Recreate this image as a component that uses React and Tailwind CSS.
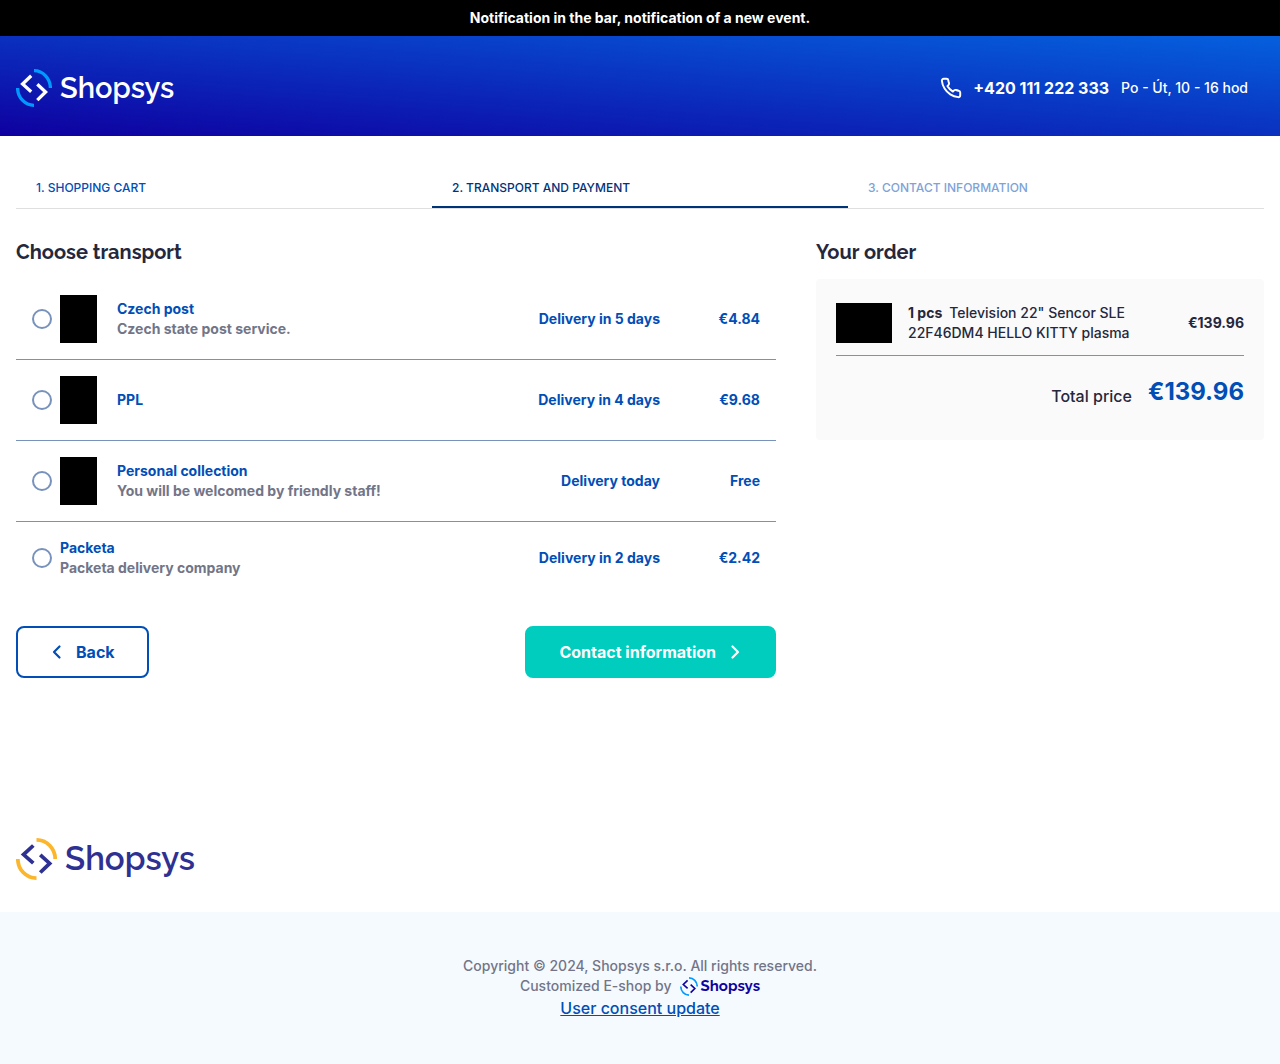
import React from "react";

const transports = [
  { id: "czech-post", name: "Czech post", note: "Czech state post service.", delivery: "Delivery in 5 days", price: "€4.84", image: true },
  { id: "ppl", name: "PPL", delivery: "Delivery in 4 days", price: "€9.68", image: true },
  { id: "personal", name: "Personal collection", note: "You will be welcomed by friendly staff!", delivery: "Delivery today", price: "Free", image: true },
  { id: "packeta", name: "Packeta", note: "Packeta delivery company", delivery: "Delivery in 2 days", price: "€2.42", image: false },
];

function LogoMark({ className, arc }) {
  return (
    <svg viewBox="0 0 36 38" fill="none" strokeWidth="3.3" preserveAspectRatio="none" className={className} aria-hidden="true">
      <path d="M18 1.7A16.4 17.3 0 0 1 34.4 19M1.6 19A16.4 17.3 0 0 0 18 36.3" stroke={arc} />
      <path d="M15.2 6.8L6.6 15L15.2 22.8M21.3 15.2L29.6 23L21.3 31.2" stroke="currentColor" />
    </svg>
  );
}

function Chevron({ d }) {
  return (
    <svg viewBox="0 0 16 16" className="size-4" fill="none" stroke="currentColor" strokeWidth="2.2" strokeLinecap="round" strokeLinejoin="round" aria-hidden="true">
      <path d={d} />
    </svg>
  );
}

function PhoneIcon() {
  return (
    <svg viewBox="-1 -1 26 26" className="size-6" fill="none" stroke="currentColor" strokeWidth="2.1" strokeLinecap="round" strokeLinejoin="round" aria-hidden="true">
      <path d="M22 16.92v3a2 2 0 0 1-2.18 2 19.79 19.79 0 0 1-8.63-3.07 19.5 19.5 0 0 1-6-6 19.79 19.79 0 0 1-3.07-8.67A2 2 0 0 1 4.11 2h3a2 2 0 0 1 2 1.72c.127.96.361 1.903.7 2.81a2 2 0 0 1-.45 2.11L8.09 9.91a16 16 0 0 0 6 6l1.27-1.27a2 2 0 0 1 2.11-.45c.907.339 1.85.573 2.81.7A2 2 0 0 1 22 16.92z" />
    </svg>
  );
}

function Transport({ item }) {
  return (
    <li className="border-b border-[#7892bc] last:border-b-0">
      <label htmlFor={item.id} className="flex cursor-pointer items-center p-4 text-sm leading-5 font-bold text-[#004eb6]">
        <input id={item.id} type="radio" name="transport" className="mr-2 size-5 shrink-0 appearance-none rounded-full border-2 border-[#7892bc] bg-white checked:border-[6px]" />
        {item.image && <span className="mr-5 h-12 w-[37px] shrink-0 bg-black" />}
        <span className="flex flex-1 flex-col">
          <span>{item.name}</span>
          {item.note && <span className="text-[#727588]">{item.note}</span>}
        </span>
        <span>{item.delivery}</span>
        <span className="w-[100px] text-right">{item.price}</span>
      </label>
    </li>
  );
}

export default function App() {
  return (
    <div className="flex min-h-screen flex-col bg-white font-['Inter',sans-serif] text-[#25283d]">
      <div className="bg-black px-4 py-2 text-center text-sm leading-5 font-bold text-white">
        Notification in the bar, notification of a new event.
      </div>
      <header className="bg-linear-to-tr/srgb from-[#0f00a0] to-[#0560de] text-white">
        <div className="flex h-[100px] items-center justify-between pt-1 pr-8 pl-4">
          <a href="#" aria-label="Shopsys" className="flex items-center gap-2">
            <LogoMark arc="#009aff" className="h-[38px] w-9" />
            <span className="font-['Raleway','Lato',sans-serif] text-[29px] leading-9 font-semibold">Shopsys</span>
          </a>
          <div className="flex items-center gap-3">
            <a href="tel:+420111222333" className="flex items-center gap-[10px] font-bold">
              <PhoneIcon />
              +420 111 222 333
            </a>
            <span className="text-sm font-medium">Po - Út, 10 - 16 hod</span>
          </div>
        </div>
      </header>

      <main className="px-4 pt-8">
        <nav aria-label="Order steps">
          <ol className="grid grid-cols-3 border-b border-[#dfdfe2] text-xs font-medium uppercase">
            <li><a href="#" className="flex h-10 items-center px-5 text-[#004eb6]">1. Shopping cart</a></li>
            <li><a href="#" aria-current="step" className="relative flex h-10 items-center px-5 text-[#00347a] after:absolute after:inset-x-0 after:bottom-0 after:h-[2px] after:bg-[#00347a]">2. Transport and payment</a></li>
            <li><span className="flex h-10 items-center px-5 text-[#7da3d8]">3. Contact information</span></li>
          </ol>
        </nav>

        <div className="mt-7 grid grid-cols-[minmax(0,1fr)_448px] items-start gap-10">
          <section>
            <h1 className="font-['Raleway','Lato',sans-serif] text-xl leading-[30px] font-bold">Choose transport</h1>
            <ul className="mt-3">
              {transports.map((item) => <Transport key={item.id} item={item} />)}
            </ul>
            <div className="mt-8 flex justify-between font-bold">
              <button type="button" className="flex h-[52px] items-center gap-[10px] rounded-lg border-2 border-[#004eb6] px-8 text-[#004eb6]">
                <Chevron d="M9.5 2.5L4 8L9.5 13.5" />
                Back
              </button>
              <button type="button" className="flex h-[52px] items-center gap-[10px] rounded-lg border-2 border-[#00cdbe] bg-[#00cdbe] px-8 text-white">
                Contact information
                <Chevron d="M6.5 2.5L12 8L6.5 13.5" />
              </button>
            </div>
          </section>

          <aside>
            <h2 className="font-['Raleway','Lato',sans-serif] text-xl leading-[30px] font-bold">Your order</h2>
            <div className="mt-3 rounded bg-[#fafafa] px-5 pt-3 pb-8">
              <div className="flex items-center border-b border-[#7892bc] py-3 text-sm leading-5">
                <span className="mr-4 h-10 w-14 shrink-0 bg-black" />
                <p className="w-60 font-medium"><strong className="mr-[7px] font-bold">1 pcs</strong>Television 22" Sencor SLE 22F46DM4 HELLO KITTY plasma</p>
                <strong className="ml-auto font-bold">€139.96</strong>
              </div>
              <div className="mt-5 flex items-end justify-end gap-4">
                <span className="font-medium">Total price</span>
                <strong className="text-2xl font-bold text-[#004eb6]">€139.96</strong>
              </div>
            </div>
          </aside>
        </div>

        <a href="#" aria-label="Shopsys" className="mt-40 mb-8 flex h-[42px] w-fit items-center gap-2 text-[#2e3192]">
          <LogoMark arc="#fbb62c" className="h-[42px] w-[41px]" />
          <span className="font-['Raleway','Lato',sans-serif] text-[33px] leading-10 font-semibold">Shopsys</span>
        </a>
      </main>

      <footer className="flex grow flex-col items-center bg-[#f5faff] pt-11 pb-11 text-sm leading-5 font-medium text-[#727588]">
        <p>Copyright © 2024, Shopsys s.r.o. All rights reserved.</p>
        <p className="flex items-center gap-2">
          Customized E-shop by
          <a href="#" aria-label="Shopsys" className="flex items-center gap-[3px] text-[#1003a0]">
            <LogoMark arc="#009aff" className="h-[19px] w-[18px]" />
            <span className="font-['Raleway','Lato',sans-serif] text-[15px] leading-5 font-bold">Shopsys</span>
          </a>
        </p>
        <a href="#" className="text-base text-[#004eb6] underline">User consent update</a>
      </footer>
    </div>
  );
}
